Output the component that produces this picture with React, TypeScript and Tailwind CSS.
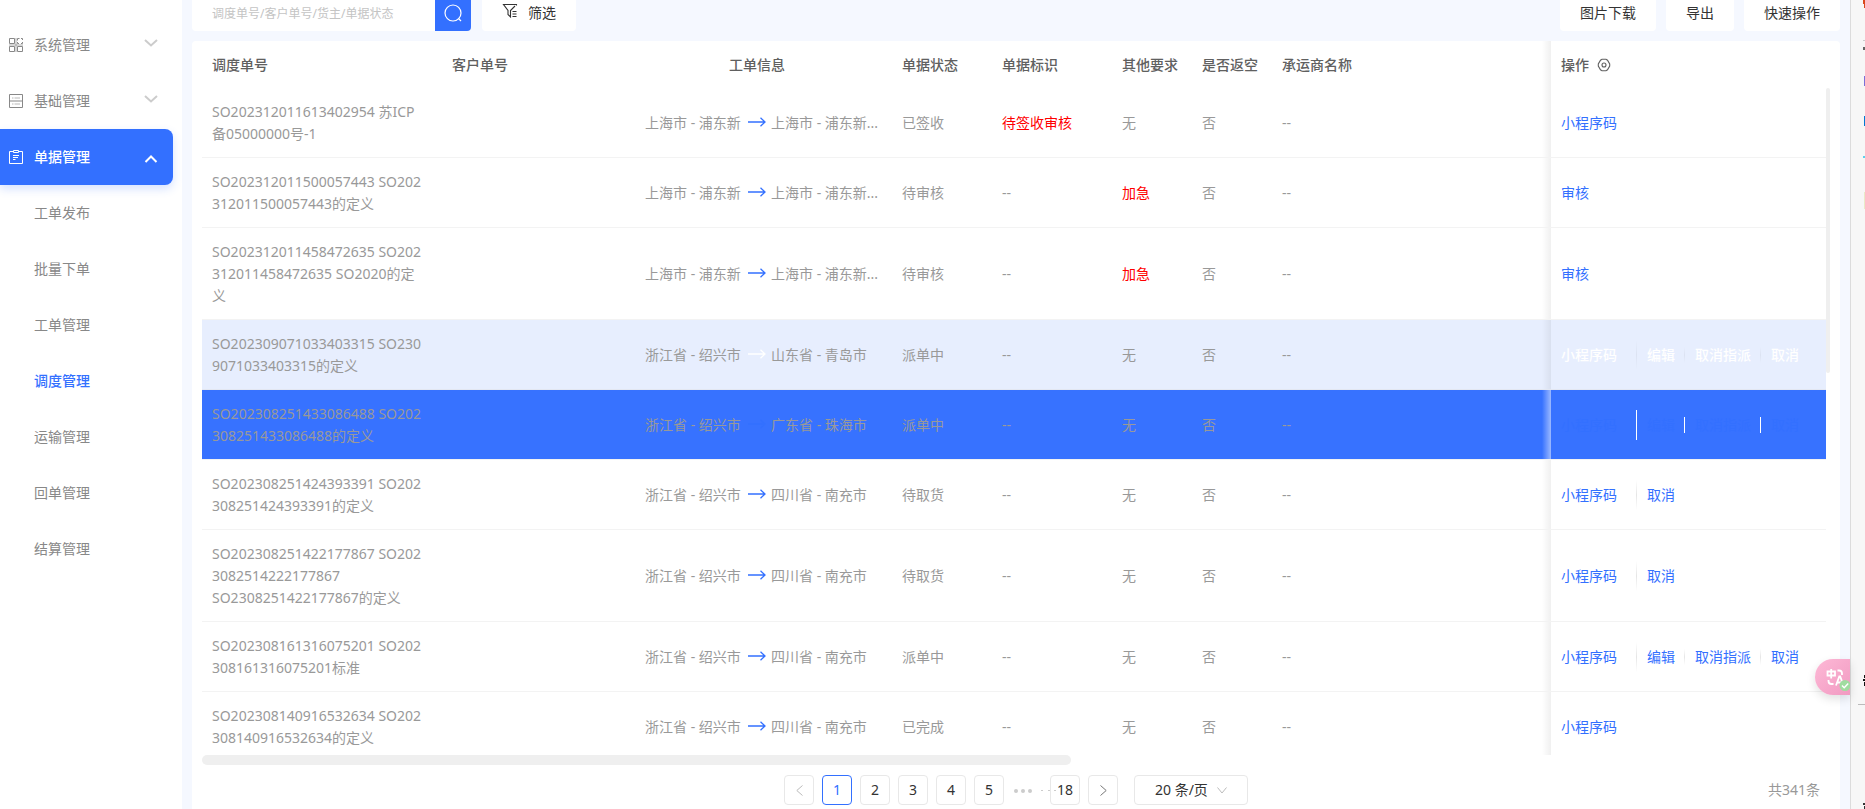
import { useState } from "react"
import clsx from "clsx"

type Tone = "normal" | "hover" | "active"

interface Order {
  lines: string[]
  from: string
  to: string
  status: string
  mark?: string
  extra?: string
  actions: string[]
  tone?: Tone
}

const orders: Order[] = [
  {
    lines: ["SO202312011613402954 苏ICP", "备05000000号-1"],
    from: "上海市 - 浦东新",
    to: "上海市 - 浦东新...",
    status: "已签收",
    mark: "待签收审核",
    actions: ["小程序码"],
  },
  {
    lines: ["SO202312011500057443 SO202", "312011500057443的定义"],
    from: "上海市 - 浦东新",
    to: "上海市 - 浦东新...",
    status: "待审核",
    extra: "加急",
    actions: ["审核"],
  },
  {
    lines: ["SO202312011458472635 SO202", "312011458472635 SO2020的定", "义"],
    from: "上海市 - 浦东新",
    to: "上海市 - 浦东新...",
    status: "待审核",
    extra: "加急",
    actions: ["审核"],
  },
  {
    lines: ["SO202309071033403315 SO230", "9071033403315的定义"],
    from: "浙江省 - 绍兴市",
    to: "山东省 - 青岛市",
    status: "派单中",
    actions: ["小程序码", "编辑", "取消指派", "取消"],
    tone: "hover",
  },
  {
    lines: ["SO202308251433086488 SO202", "308251433086488的定义"],
    from: "浙江省 - 绍兴市",
    to: "广东省 - 珠海市",
    status: "派单中",
    actions: ["小程序码", "编辑", "取消指派", "取消"],
    tone: "active",
  },
  {
    lines: ["SO202308251424393391 SO202", "308251424393391的定义"],
    from: "浙江省 - 绍兴市",
    to: "四川省 - 南充市",
    status: "待取货",
    actions: ["小程序码", "取消"],
  },
  {
    lines: ["SO202308251422177867 SO202", "3082514222177867", "SO2308251422177867的定义"],
    from: "浙江省 - 绍兴市",
    to: "四川省 - 南充市",
    status: "待取货",
    actions: ["小程序码", "取消"],
  },
  {
    lines: ["SO202308161316075201 SO202", "308161316075201标准"],
    from: "浙江省 - 绍兴市",
    to: "四川省 - 南充市",
    status: "派单中",
    actions: ["小程序码", "编辑", "取消指派", "取消"],
  },
  {
    lines: ["SO202308140916532634 SO202", "308140916532634的定义"],
    from: "浙江省 - 绍兴市",
    to: "四川省 - 南充市",
    status: "已完成",
    actions: ["小程序码"],
  },
]

const subMenu = ["工单发布", "批量下单", "工单管理", "调度管理", "运输管理", "回单管理", "结算管理"]

const GridIcon = () => (
  <svg width="14" height="14" viewBox="0 0 14 14" fill="none" stroke="currentColor" aria-hidden="true">
    <path d="M.5.5h5v5h-5zM.5 8.5h5v5h-5zM8.5 8.5h5v5h-5z" />
    <path d="M8.5 2.5v-2h2M12 .5h1.5V2M13.5 4v1.5H12M10 5.5H8.5V4" />
    <path d="M0 6.500h14M0 7.500h14M6.500 0v14M7.500 0v14" opacity=".35" />
  </svg>
)

const RowsIcon = () => (
  <svg width="14" height="14" viewBox="0 0 14 14" fill="none" stroke="currentColor" aria-hidden="true">
    <path d="M.5.5h13v13H.5z" />
    <path d="M1 6.5h12M1 7.5h12" opacity=".5" />
    <path d="M3 4h1.5M5.5 4H11M3 10h1.5M5.5 10H11" opacity=".6" />
  </svg>
)

const ClipIcon = () => (
  <svg width="14" height="14" viewBox="0 0 14 14" fill="none" stroke="currentColor" aria-hidden="true">
    <path d="M4 1.5H.5v12h13v-12H10" />
    <path d="M4.5.5h5v2h-5zM4 5.5h6M4 7.5h5M4 9.5h2.5" />
  </svg>
)

const Chevron = ({ up, className }: { up?: boolean; className?: string }) => (
  <svg width="14" height="8" viewBox="0 0 14 8" fill="none" stroke="currentColor" className={className} aria-hidden="true">
    <path d={up ? "M1.5 7 7 1.5 12.5 7" : "M1 1l6 5.5L13 1"} strokeWidth={2} />
  </svg>
)

const Sidebar = () => (
  <nav className="flex w-[182px] shrink-0 flex-col bg-white pt-[17px] text-sm text-[#888]">
    <button className="flex h-14 w-[173px] items-center pr-[15px] pl-[9px]">
      <GridIcon />
      <span className="ml-[11px] flex-1 text-left">系统管理</span>
      <Chevron className="mb-1 text-[#ccc]" />
    </button>
    <button className="flex h-14 w-[173px] items-center pr-[15px] pl-[9px]">
      <RowsIcon />
      <span className="ml-[11px] flex-1 text-left">基础管理</span>
      <Chevron className="mb-1 text-[#ccc]" />
    </button>
    <button
      aria-expanded="true"
      className="flex h-14 w-[173px] items-center rounded-r-lg bg-[#3370ff] pr-[15px] pl-[9px] font-medium text-white shadow-[0_4px_10px_rgba(51,112,255,0.2)]"
    >
      <ClipIcon />
      <span className="ml-[11px] flex-1 text-left">单据管理</span>
      <Chevron up className="mt-1" />
    </button>
    <ul>
      {subMenu.map((name) => (
        <li key={name}>
          <a
            href="#"
            className={clsx("flex h-14 items-center pl-[34px]", name === "调度管理" && "font-medium text-[#3370ff]")}
          >
            {name}
          </a>
        </li>
      ))}
    </ul>
  </nav>
)

const Toolbar = () => (
  <div className="flex h-[31px] shrink-0 items-end overflow-hidden text-sm text-[#333]">
    <input
      type="text"
      aria-label="搜索"
      placeholder="调度单号/客户单号/货主/单据状态"
      className="h-9 w-[243px] rounded-l bg-white px-5 text-xs outline-none placeholder:text-[#c4c4c4]"
    />
    <button aria-label="查询" className="flex h-9 w-9 items-center justify-center rounded-r bg-[#3370ff] text-white">
      <svg width="18" height="18" viewBox="0 0 18 18" fill="none" stroke="currentColor" strokeWidth="1.2">
        <circle cx="9" cy="9" r="8" />
        <path d="M14.5 14.5 17 17" />
      </svg>
    </button>
    <button className="ml-[11px] flex h-9 w-[94px] items-center justify-center gap-[10px] rounded bg-white">
      <svg width="16" height="16" viewBox="0 0 16 16" fill="none" stroke="currentColor" strokeWidth="1.1" className="mb-1">
        <path d="M14.5 2.5v-1h-13L6 7.5v4l2.5 2.5V7.5L13 3" />
        <path d="M10.500 8.500h4M10.500 11h4M10.500 13.500h4" />
      </svg>
      筛选
    </button>
    <div className="ml-auto flex gap-[10px]">
      <button className="h-9 rounded bg-white px-5">图片下载</button>
      <button className="h-9 rounded bg-white px-5">导出</button>
      <button className="h-9 rounded bg-white px-5">快速操作</button>
    </div>
  </div>
)

// Shadow cast by the pinned action column
const PinShadow = ({ tone }: { tone?: Tone }) => (
  <span
    className={clsx(
      "absolute inset-y-0 right-full w-[9px] bg-linear-to-r from-transparent",
      tone === "active" ? "to-white/50" : "to-black/6"
    )}
  />
)

const OrderRow = ({ order }: { order: Order }) => {
  const tone = order.tone ?? "normal"
  const red = "text-[#ff0000]"

  return (
    <tr
      className={clsx(
        "border-b [&>td]:px-[10px]",
        tone === "normal" && "border-[#f3f3f3]",
        tone === "hover" && "border-[#e3e7f2] bg-[#e7eefe]",
        tone === "active" && "border-[#f3f3f3] bg-[#3772ff]"
      )}
    >
      <td className="pt-[13px] pb-3 leading-[22px] whitespace-nowrap">
        {order.lines.map((line) => (
          <div key={line}>{line}</div>
        ))}
      </td>
      <td />
      <td>
        <div className="flex items-center justify-start pl-[13px] whitespace-nowrap">
          <span className="w-[98px]">{order.from}</span>
          <svg
            width="18"
            height="10"
            viewBox="0 0 18 10"
            fill="none"
            stroke="currentColor"
            strokeWidth="1.3"
            className={clsx("mx-[5px] mb-[2px]", tone === "hover" ? "text-white" : "text-[#3370ff]")}
            aria-hidden="true"
          >
            <path d="M0 5h17M12.500 .800 17 5l-4.500 4.200" />
          </svg>
          <span>{order.to}</span>
        </div>
      </td>
      <td>{order.status}</td>
      <td className={order.mark && red}>{order.mark ?? "--"}</td>
      <td className={order.extra && red}>{order.extra ?? "无"}</td>
      <td>否</td>
      <td>--</td>
      <td className="relative">
        <PinShadow tone={tone} />
        <div
          className={clsx("flex items-center whitespace-nowrap", tone === "hover" ? "font-medium text-white" : "text-[#3370ff]")}
        >
          {order.actions.map((name, i) => (
            <span key={name} className="flex items-center">
              {i > 0 && (
                <span
                  className={clsx(
                    "mr-[10px] w-px",
                    i === 1 ? "ml-[19px] h-[30px]" : "ml-[9px] h-4",
                    tone === "active" && "bg-white",
                    tone === "hover" && "bg-linear-to-b from-transparent via-black/5 to-transparent",
                    tone === "normal" && "bg-linear-to-b from-transparent via-black/10 to-transparent"
                  )}
                />
              )}
              <button>{name}</button>
            </span>
          ))}
        </div>
      </td>
    </tr>
  )
}

const OrderTable = () => (
  <div className="flex min-h-0 flex-1 overflow-hidden">
    <table className="w-full flex-1 table-fixed self-start text-sm text-[#999]">
      <colgroup>
        <col className="w-[240px]" />
        <col className="w-[180px]" />
        <col className="w-[270px]" />
        <col className="w-[100px]" />
        <col className="w-[120px]" />
        <col className="w-[80px]" />
        <col className="w-[80px]" />
        <col />
        <col className="w-[275px]" />
      </colgroup>
      <thead>
        <tr className="h-[47px] text-left text-[#606060] [&>th]:px-[10px] [&>th]:font-medium">
          <th>调度单号</th>
          <th>客户单号</th>
          <th className="text-center">工单信息</th>
          <th>单据状态</th>
          <th>单据标识</th>
          <th>其他要求</th>
          <th>是否返空</th>
          <th>承运商名称</th>
          <th className="relative">
            <PinShadow />
            <div className="flex items-center gap-2">
              操作
              <button aria-label="列设置">
                <svg width="14" height="14" viewBox="0 0 14 14" fill="none" stroke="currentColor" strokeWidth="1.1">
                  <path d="M5 1.200h4l1.500 1L12.700 6v2l-2.200 3.800-1.500 1H5l-1.500-1L1.300 8V6l2.200-3.800z" />
                  <circle cx="7" cy="7" r="2" />
                </svg>
              </button>
            </div>
          </th>
        </tr>
      </thead>
      <tbody>
        {orders.map((order) => (
          <OrderRow key={order.lines[0]} order={order} />
        ))}
      </tbody>
    </table>
    <div className="w-1 shrink-0 pt-[47px]">
      <div className="h-[285px] rounded-full bg-[#efefef]" />
    </div>
  </div>
)

const Pagination = () => {
  const [page, setPage] = useState(1)

  const item = (n: number) => (
    <button
      key={n}
      onClick={() => setPage(n)}
      className={clsx(
        "h-[30px] w-[30px] rounded border",
        n === page ? "border-[#3370ff] text-[#3370ff]" : "border-[#e8e8e8] text-[#333]"
      )}
    >
      {n}
    </button>
  )

  return (
    <div className="relative mt-[10px] mb-1 flex shrink-0 items-center justify-center gap-2 text-sm">
      <button aria-label="上一页" className="flex h-[30px] w-[30px] items-center justify-center rounded border border-[#e8e8e8] text-[#bbb]">
        <svg width="7" height="11" viewBox="0 0 7 11" fill="none" stroke="currentColor">
          <path d="M6.500.500.800 5.500l5.700 5" />
        </svg>
      </button>
      {[1, 2, 3, 4, 5].map(item)}
      <button aria-label="向后 5 页" className="relative h-[30px] w-[30px] text-[#ccc]">
        <svg width="45" height="4" viewBox="0 0 45 4" fill="currentColor" className="absolute top-[14px] left-0">
          <circle cx="4" cy="2" r="2" />
          <circle cx="11" cy="2" r="2" />
          <circle cx="18" cy="2" r="2" />
          <path d="M29 1h2v1h-2zM36 1h2v1h-2zM42 1h2v1h-2z" />
        </svg>
      </button>
      {item(18)}
      <button aria-label="下一页" className="flex h-[30px] w-[30px] items-center justify-center rounded border border-[#e8e8e8] text-[#777]">
        <svg width="7" height="11" viewBox="0 0 7 11" fill="none" stroke="currentColor">
          <path d="M.500.500l5.700 5-5.700 5" />
        </svg>
      </button>
      <div className="relative ml-2">
        <select
          aria-label="每页条数"
          className="h-[30px] w-[114px] appearance-none rounded border border-[#e8e8e8] bg-transparent pl-5 text-[#333]"
        >
          <option>20 条/页</option>
          <option>50 条/页</option>
        </select>
        <svg
          width="10"
          height="7"
          viewBox="0 0 10 7"
          fill="none"
          stroke="#bbb"
          className="pointer-events-none absolute top-[12px] right-[21px]"
        >
          <path d="M.500.500 5 6 9.500.500" />
        </svg>
      </div>
      <span className="absolute right-[10px] text-[#999]">共341条</span>
    </div>
  )
}

const TranslateBubble = () => (
  <button
    aria-label="翻译"
    className="absolute top-[659px] right-[15px] h-9 w-[35px] rounded-l-full bg-linear-to-br from-[#fdb9d6] to-[#f19ac2] text-white shadow-[0_4px_10px_rgba(0,0,0,0.12)]"
  >
    <svg width="35" height="36" viewBox="0 0 35 36" fill="none" stroke="currentColor" strokeWidth="1.8">
      <path d="M12.500 12.500h7.500v4h-7.500zM16.200 10v9.500" />
      <path d="M22.500 11.500h1.500q3 0 3 3V16M13.500 21v1q0 3 3 3h2" />
      <path d="M21 26.500l3.300-9h.9l3.300 9M22 23.500h5.500" />
      <circle cx="30" cy="26.500" r="5.500" fill="#a0dca0" stroke="none" />
      <path d="M27 26.500l2.200 2.200 4-4.200" strokeWidth="1.500" />
    </svg>
  </button>
)

const EdgePanel = () => (
  <aside className="w-[15px] shrink-0 border-l border-[#dcdcdc] bg-[#f7f7f7]">
    <svg width="14" height="809" viewBox="0 0 14 809" aria-hidden="true">
      <path d="M12 0h2v8h-1V4h-1z" fill="#d9481c" />
      <path d="M12 40h2v1h-2z" fill="#ccc" />
      <path d="M12 47h2v3h-2z" fill="#666" />
      <path d="M13 76h1v10h-1z" fill="#7a70d8" />
      <path d="M13 116h1v10h-1z" fill="#0078d4" />
      <path d="M12 156h2v2h-2z" fill="#5cd0ee" />
      <path d="M13 192h1v17h-1z" fill="#e9ebc9" />
      <path d="M13 675h1v3h-1zM12 679h2v2h-2zM13 682h1v4h-1z" fill="#111" />
      <path d="M7 704h7v1H7z" fill="#bbb" />
      <path d="M12 803h2v2h-2zM13 806h1v3h-1z" fill="#333" />
    </svg>
  </aside>
)

export default function App() {
  return (
    <div className="relative flex h-screen overflow-hidden bg-[#f5f8ff] font-['Noto_Sans','Noto_Sans_CJK_SC',sans-serif]">
      <Sidebar />
      <main className="flex min-w-0 flex-1 flex-col px-[10px]">
        <Toolbar />
        <section className="mt-[10px] flex min-h-0 flex-1 flex-col rounded-t bg-white px-[10px]">
          <OrderTable />
          <div className="h-[10px] w-[869px] shrink-0 rounded-full bg-[#efefef]" />
          <Pagination />
        </section>
      </main>
      <EdgePanel />
      <TranslateBubble />
    </div>
  )
}
